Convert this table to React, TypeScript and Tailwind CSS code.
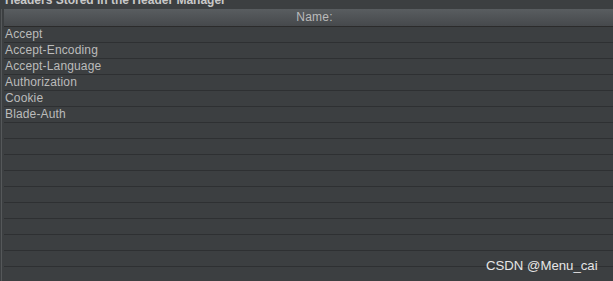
const rows = [
  "Accept",
  "Accept-Encoding",
  "Accept-Language",
  "Authorization",
  "Cookie",
  "Blade-Auth",
];

// pad out to a full table of empty rows like the Swing table shows
const filled = [...rows, ...Array(16 - rows.length).fill("")];

export default function App() {
  return (
    <div
      className="relative w-[613px] h-[281px] overflow-hidden bg-[#3c3f41] text-[#bbbbbb] text-[12px]"
      style={{ fontFamily: '"Liberation Sans", Arial, sans-serif' }}
    >
      {/* Panel title, scrolled partly out of view */}
      <div className="h-[9px] overflow-hidden">
        <div className="-mt-[9px] pl-[5px] h-[18px] leading-[18px] font-bold text-[#c8c8c8]">
          Headers Stored in the Header Manager
        </div>
      </div>

      <div className="flex h-[272px]">
        <div className="w-[4px] flex">
          <div className="w-[1px] ml-[1px] bg-[#55585a]" />
        </div>
        <div className="flex-1 flex flex-col">
          {/* Column header */}
          <div className="h-[18px] shrink-0 leading-[17px] pl-[12px] text-center tracking-[0.2px] bg-gradient-to-b from-[#595d60] to-[#46494c] border-b border-[#2b2b2b]">
            Name:
          </div>
          {filled.map((name, i) => (
            <div
              key={i}
              className="h-[16px] shrink-0 leading-[15px] pl-[1px] tracking-[0.15px] border-b border-[#2e3032]"
            >
              {name}
            </div>
          ))}
        </div>
      </div>

      <div className="absolute left-[486px] top-[256px] text-[13.2px] text-[#e6e6e6]">
        CSDN @Menu_cai
      </div>
    </div>
  );
}
